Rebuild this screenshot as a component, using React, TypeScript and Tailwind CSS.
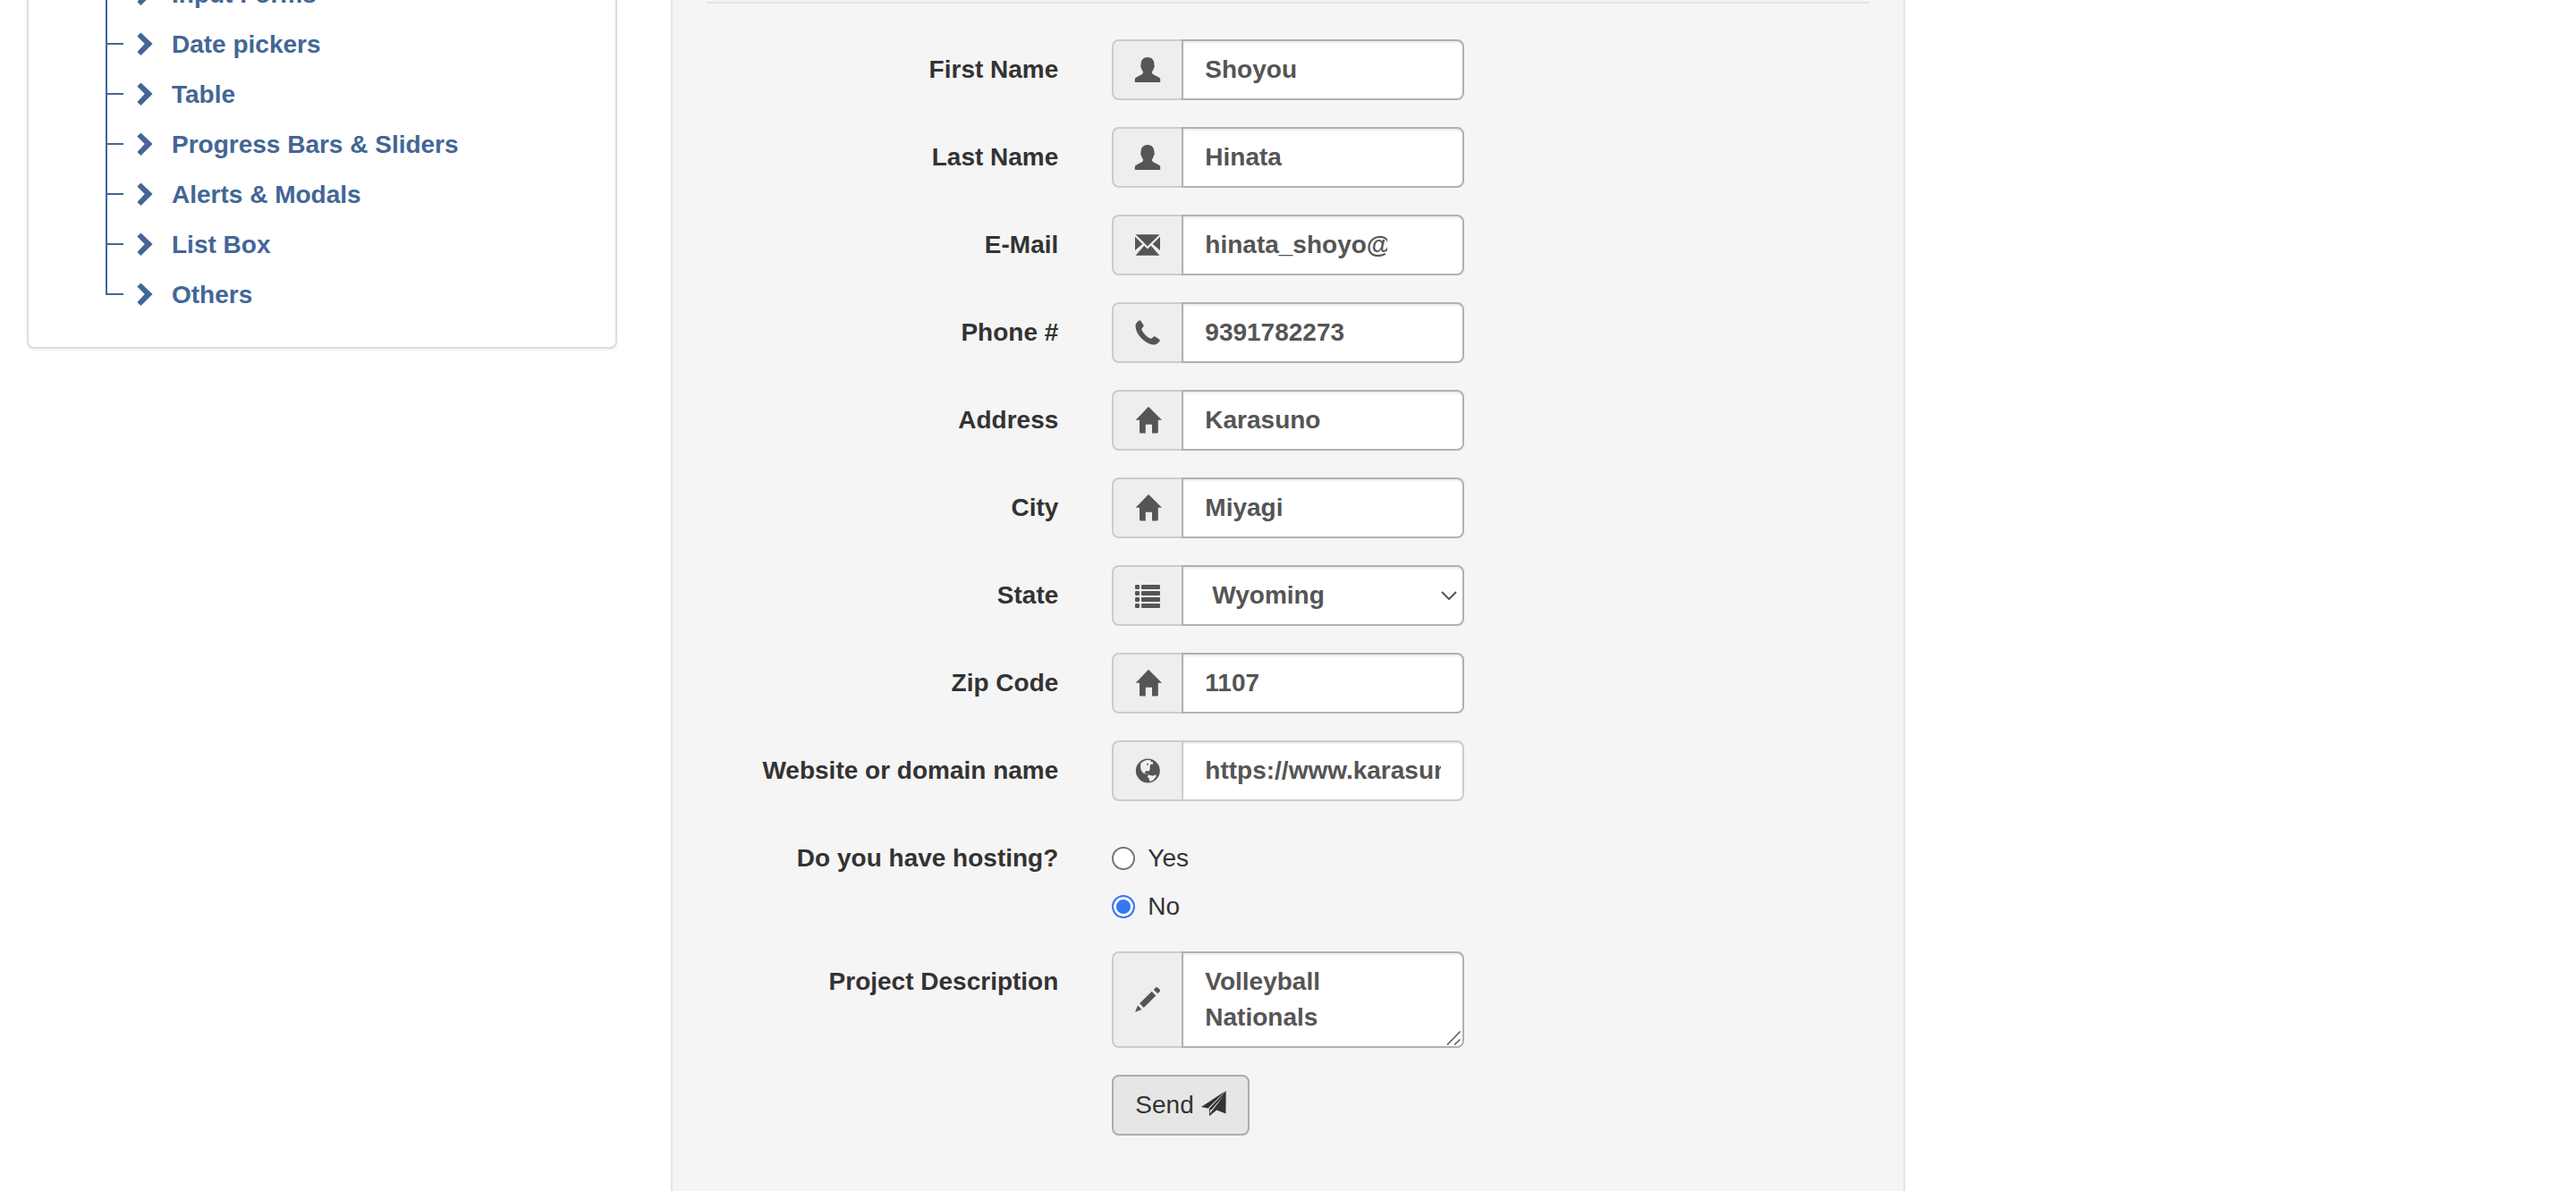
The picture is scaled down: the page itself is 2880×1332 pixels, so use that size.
import React from "react";

type Glyph = "user" | "envelope" | "phone" | "home" | "list" | "globe" | "pencil" | "plane" | "chevron";

function Icon({ name, className = "" }: { name: Glyph; className?: string }) {
  return (
    <svg viewBox="0 0 28 28" className={`size-7 shrink-0 overflow-visible fill-current ${className}`} aria-hidden="true">
      {name === "user" && (
        <path d="M14 0C18.6 0 21.4 3.2 21.4 7.6c0 1.2.4 1.2.3 2.6-.1 1.600-.900 2-1.200 3.300-.300 1.600-1.500 2.200-1.500 3.200 0 1.800 1 2.400 2.400 3.100l5.200 2.700c1.200.600 1.600 1.400 1.600 2.600V28H-.2v-2.900c0-1.200.4-2 1.600-2.600L6.600 19.800C8 19.100 9 18.500 9 16.700c0-1-1.200-1.600-1.500-3.200-.3-1.300-1.100-1.700-1.200-3.300-.1-1.400.3-1.400.3-2.600C6.600 3.200 9.400 0 14 0z" />
      )}
      {name === "envelope" && (
        <path d="M.6 2.200h26.800L14 15.600zM0 4.800l8.300 8.100L0 19.900zM28 4.800v15.100l-8.300-7zM10.200 14.800l3.800 3.700 3.800-3.700L27.400 25.800H.6z" />
      )}
      {name === "phone" && (
        <path d="M4.500.5c.6-.5 1.300-.4 1.800.2l3.100 4.700c.4.6.3 1.300-.1 1.800L7.200 9.900c1.500 4.600 6.300 9.400 10.900 10.900l2.700-2.100c.5-.4 1.200-.5 1.800-.1l4.700 3.100c.6.500.7 1.200.2 1.800-1.500 2.300-3.500 3.900-6.100 4C12 27.500.5 16 .5 6.600c.1-2.600 1.700-4.600 4-6.100z" />
      )}
      {name === "home" && (
        <path d="M15.400-.8 30 13.800h-4.200v13.500c0 .7-.4 1.100-1 1.100h-5.800v-9.600h-7.200v9.600H6c-.6 0-1-.4-1-1.100V13.800H.6L14.600-.8c.3-.3.600-.3.800 0z" />
      )}
      {name === "list" && (
        <>
          {[2, 9, 16, 23].map((y) => (
            <g key={y}>
              <rect x="0" y={y} width="5" height="5" rx="1.2" />
              <rect x="7" y={y} width="21" height="5" rx="1.2" />
            </g>
          ))}
        </>
      )}
      {name === "globe" && (
        <path
          fillRule="evenodd"
          d="M14.300.5a13.500 13.500 0 1 0 0 27 13.500 13.500 0 0 0 0-27zM6.500 5.500 10 3l4-1.200 4 .7-.5 1.500 2.500.2.300 2.300-2.800.3-1 2.700.3 2.500-1.600 2.800-2.400-.8-1.800 1.500.5 2 2.800.1L13 18.300l-4-1.800L6.500 13 6 9.500zM13 6h2v1.600h-2zM15 18.600l5 1.200 3.300-1.600.2 2.300-3.500 4.300-3.500 1.200-1-3.500-1.700-1.700z"
        />
      )}
      {name === "pencil" && (
        <path d="M23.200.5c.7-.7 1.500-.7 2.200 0l2.200 2.200c.7.700.7 1.500 0 2.200l-2.400 2.400-4.500-4.500zM18.700 4.800l4.600 4.600L9.800 22.900l-4.700-4.700zM3.100 20.600l4.300 4.300L0 28z" />
      )}
      {name === "plane" && (
        <path d="M27.700-2 27.400 23.400 17.200 19.600 9 26.200 8.800 18 27.700-2zM26.900-1.800 0 16l7.600 1.400zM25.600 2.800 11 19.600l-1.200-.5-.1 4.500 3.800-5.200z" fillRule="evenodd" />
      )}
      {name === "chevron" && <path d="M9.500.6 22.600 13.100 9.500 26 5.400 21.900l8.400-8.800-8.400-8.500z" />}
    </svg>
  );
}

const links = ["Input Forms", "Date pickers", "Table", "Progress Bars & Sliders", "Alerts & Modals", "List Box", "Others"];

function Sidebar() {
  return (
    <nav className="h-[390px] overflow-hidden rounded-b-lg border-2 border-t-0 border-[#dddddd] bg-white pl-[86px] shadow-[0_2px_2px_rgba(0,0,0,0.05)]">
      <ul className="-mt-[34px]">
        {links.map((text, i) => (
          <li key={text} className="flex h-14 items-center">
            <span className="flex h-full w-5 flex-col">
              <span className="h-[28px] w-full border-b-2 border-l-2 border-[#436696]" />
              <span className={i < links.length - 1 ? "w-full flex-1 border-l-2 border-[#436696]" : "flex-1"} />
            </span>
            <a href="#" className="ml-2.5 flex items-center gap-4 text-[28px] leading-10 font-bold text-[#436696]">
              <Icon name="chevron" />
              {text}
            </a>
          </li>
        ))}
      </ul>
    </nav>
  );
}

function Row({ label, htmlFor, children }: { label?: string; htmlFor?: string; children: React.ReactNode }) {
  return (
    <div className="-mx-[30px] grid grid-cols-3">
      <div className="px-[30px] pt-3.5 text-right font-bold">{label && <label htmlFor={htmlFor}>{label}</label>}</div>
      <div className="px-[30px]">{children}</div>
    </div>
  );
}

function Group({ icon, children }: { icon: Glyph; children: React.ReactNode }) {
  return (
    <div className="flex">
      <span className="flex w-[78px] shrink-0 items-center justify-center rounded-l-lg border-2 border-r-0 border-[#cccccc] bg-[#eeeeee] text-[#555555]">
        <Icon name={icon} />
      </span>
      <div className="relative flex min-w-0 flex-1">{children}</div>
    </div>
  );
}

const control =
  "w-full min-w-0 rounded-r-lg border-2 bg-white pl-6 font-bold text-[#555555] shadow-[inset_0_2px_2px_rgba(0,0,0,0.075)] outline-none";

type Field = { id: string; label: string; icon: Glyph; value: string };

const fields: Field[] = [
  { id: "first", label: "First Name", icon: "user", value: "Shoyou" },
  { id: "last", label: "Last Name", icon: "user", value: "Hinata" },
  { id: "email", label: "E-Mail", icon: "envelope", value: "hinata_shoyo@" },
  { id: "phone", label: "Phone #", icon: "phone", value: "9391782273" },
  { id: "address", label: "Address", icon: "home", value: "Karasuno" },
  { id: "city", label: "City", icon: "home", value: "Miyagi" },
  { id: "state", label: "State", icon: "list", value: "Wyoming" },
  { id: "zip", label: "Zip Code", icon: "home", value: "1107" },
  { id: "website", label: "Website or domain name", icon: "globe", value: "https://www.karasuno.com" },
];

function FieldControl({ id, value }: Field) {
  if (id === "state") {
    return (
      <>
        <select id={id} defaultValue={value} className={`${control} h-[68px] appearance-none border-[#a9b6aa] pr-6 indent-2`}>
          <option>{value}</option>
        </select>
        <svg viewBox="0 0 18 10" className="pointer-events-none absolute top-[29px] right-2 h-2.5 w-[18px] fill-none stroke-[#555555]" strokeWidth="2" aria-hidden="true">
          <path d="m1 1 8 8 8-8" />
        </svg>
      </>
    );
  }
  const border = id === "website" ? "border-[#cccccc]" : "border-[#a9b6aa]";
  const padding = id === "email" ? "pr-[84px]" : "pr-6";
  return <input id={id} type="text" defaultValue={value} className={`${control} h-[68px] ${border} ${padding}`} />;
}

function Radio({ label, checked }: { label: string; checked?: boolean }) {
  return (
    <label className="flex items-center gap-3.5 pt-3.5">
      <input
        type="radio"
        name="hosting"
        defaultChecked={checked}
        className="size-[26px] appearance-none rounded-full border-2 border-[#767676] bg-white checked:border-[#3478f6] checked:bg-[#3478f6] checked:shadow-[inset_0_0_0_3px_white]"
      />
      {label}
    </label>
  );
}

export default function App() {
  return (
    <div className="grid grid-cols-4 items-start overflow-hidden bg-white font-['Liberation_Sans',Arial,sans-serif] text-[28px] leading-10 text-[#333333]">
      <div className="px-[30px]">
        <Sidebar />
      </div>
      <main className="col-span-2 px-[30px]">
        <form
          onSubmit={(e) => e.preventDefault()}
          className="min-h-screen border-x-2 border-[#e3e3e3] bg-[#f5f5f5] px-[38px] pt-0.5 pb-[62px]"
        >
          <div className="mb-10 border-b-2 border-[#e5e5e5]" />
          <div className="flex flex-col gap-[30px]">
            {fields.map((field) => (
              <Row key={field.id} label={field.label} htmlFor={field.id}>
                <Group icon={field.icon}>
                  <FieldControl {...field} />
                </Group>
              </Row>
            ))}
            <Row label="Do you have hosting?">
              <Radio label="Yes" />
              <Radio label="No" checked />
            </Row>
            <Row label="Project Description" htmlFor="description">
              <Group icon="pencil">
                <textarea
                  id="description"
                  defaultValue={"Volleyball\nNationals"}
                  className={`${control} h-[108px] resize-none overflow-hidden border-[#adb5ab] py-3 pr-6`}
                />
                <svg viewBox="0 0 18 18" className="pointer-events-none absolute right-1 bottom-[3px] size-[18px] fill-none stroke-[#555555]" strokeWidth="1.500" aria-hidden="true">
                  <path d="M3 17.500l14.500-15M11 17.500l6.500-6" />
                </svg>
              </Group>
            </Row>
            <Row>
              <button type="submit" className="flex h-[68px] items-center gap-2 rounded-lg border-2 border-[#adadad] bg-[#e6e6e6] px-6">
                Send
                <Icon name="plane" />
              </button>
            </Row>
          </div>
        </form>
      </main>
    </div>
  );
}
